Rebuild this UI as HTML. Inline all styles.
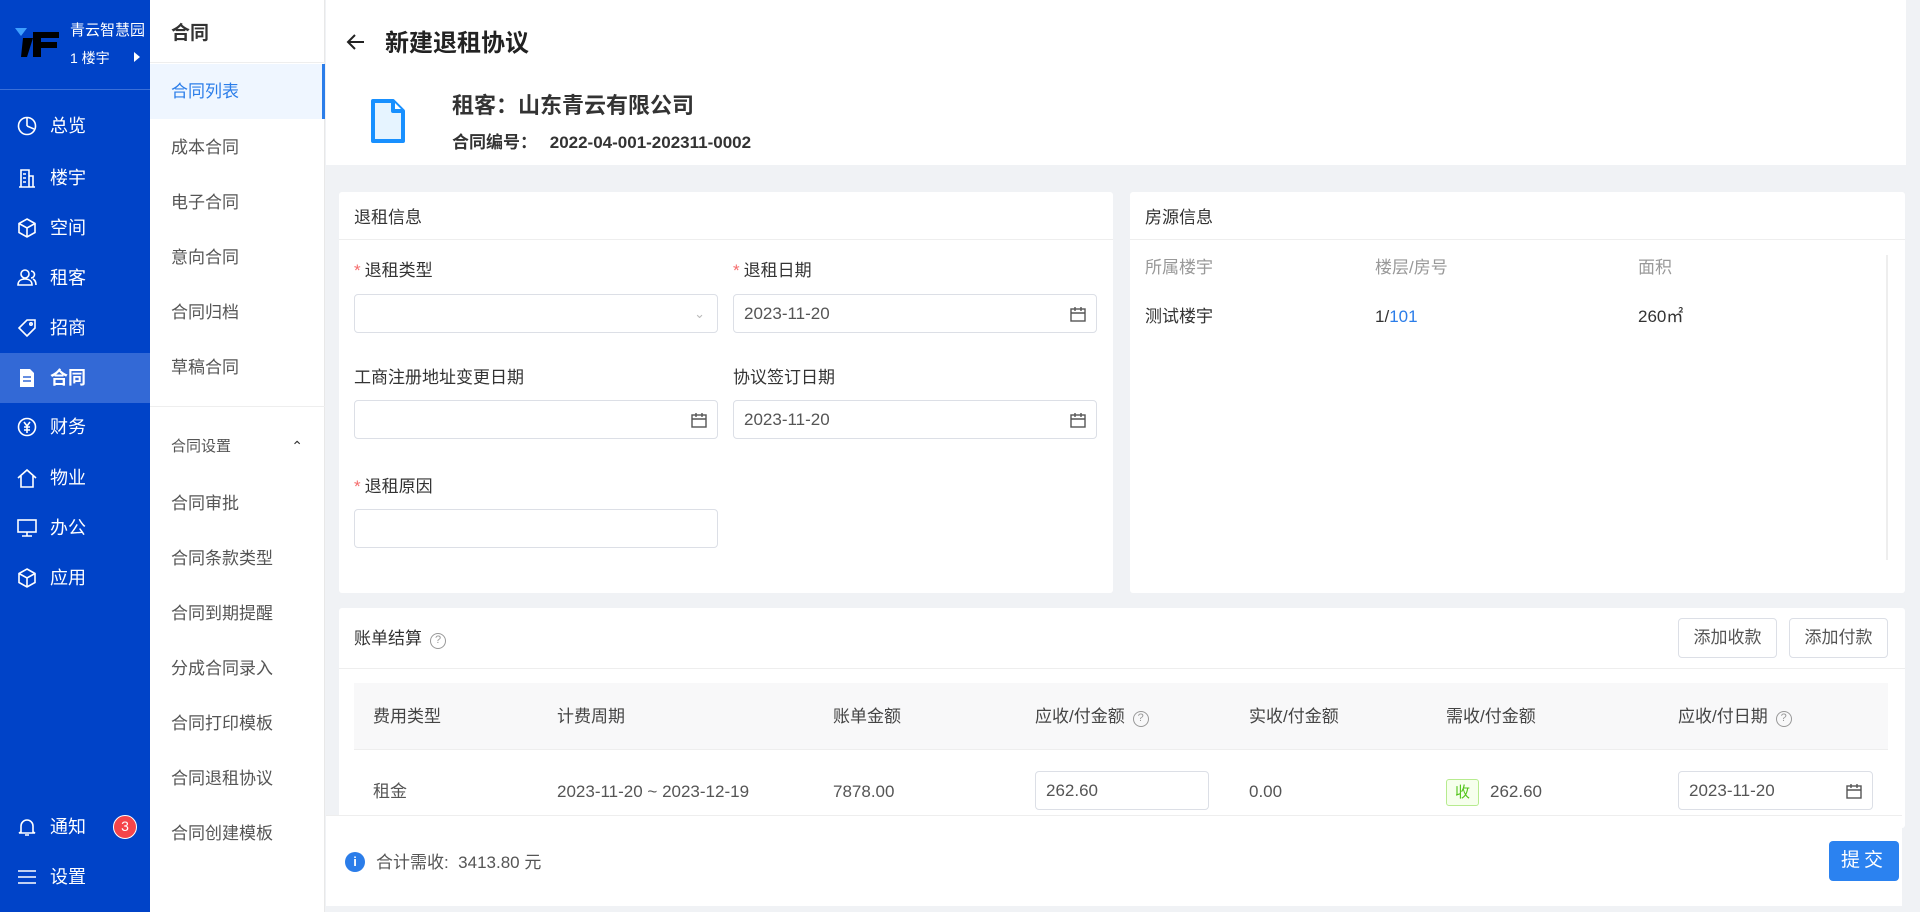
<!DOCTYPE html>
<html><head><meta charset="utf-8">
<style>
*{box-sizing:border-box;margin:0;padding:0}
body{width:1920px;height:912px;overflow:hidden;background:#f0f2f5;font-family:"Liberation Sans","Noto Sans CJK SC",sans-serif;color:#333;font-size:17px;position:relative}
.a{position:absolute;line-height:22px}
.side{left:0;top:0;width:150px;height:912px;background:#0043c8;color:#fff}
.mi{position:absolute;left:0;width:150px;height:50px;line-height:50px;padding-left:50px;font-size:18px;color:#fff}
.mi svg{position:absolute;left:17px;top:15px}
.sub{left:150px;top:0;width:175px;height:912px;background:#fff;border-right:1px solid #e8e8e8}
.si{position:absolute;left:0;width:175px;height:55px;line-height:55px;padding-left:21px;font-size:17px;color:#555}
.card{background:#fff;border-radius:3px}
.lbl{font-size:17px;color:#333}
.req{color:#f56c6c;margin-right:4px}
.inp{position:absolute;border:1px solid #dcdfe6;border-radius:4px;background:#fff;height:39px;font-size:17px;color:#555;padding:0 10px;line-height:37px}
.cal{position:absolute;right:10px;top:11px}
.th{position:absolute;top:706px;font-size:17px;color:#444;line-height:22px}
.td{position:absolute;top:781px;font-size:17px;color:#555;line-height:22px}
.btn{position:absolute;border:1px solid #dcdfe6;border-radius:4px;background:#fff;font-size:17px;color:#555;text-align:center;line-height:38px}
.q{display:inline-block;width:16px;height:16px;border:1.5px solid #999;border-radius:50%;font-size:11px;line-height:13px;text-align:center;color:#999;vertical-align:1px;margin-left:8px}
</style></head><body>

<div class="a side">
  <div class="a" style="left:15px;top:28px;width:44px;height:32px">
    <svg width="44" height="32" viewBox="0 0 44 32"><polygon points="0,0 12,0 6,8" fill="#3fa0ff"/><path d="M8 10h10l-6 19H6z M18 4h26v6H26v4h16v6H26v9h-8z" fill="#000"/></svg>
  </div>
  <div class="a" style="left:70px;top:20px;font-size:15px;white-space:nowrap;width:78px;overflow:hidden">青云智慧园</div>
  <div class="a" style="left:70px;top:47px;font-size:14px">1 楼宇</div>
  <div class="a" style="left:134px;top:52px;width:0;height:0;border-left:6px solid #fff;border-top:5px solid transparent;border-bottom:5px solid transparent"></div>
  <div class="a" style="left:0;top:89px;width:150px;height:1px;background:#3a6fd8"></div>
  <div class="mi" style="top:101px"><svg width="20" height="20" viewBox="0 0 20 20" fill="none" stroke="#fff" stroke-width="1.6"><circle cx="10" cy="10" r="8.5"/><path d="M10 10V2M10 10l7 3"/></svg>总览</div>
  <div class="mi" style="top:153px"><svg width="20" height="20" viewBox="0 0 20 20" fill="none" stroke="#fff" stroke-width="1.6"><path d="M2 19h16M4 19V2h8v17M12 8h4v11M6 6h3M6 10h3M6 14h3"/></svg>楼宇</div>
  <div class="mi" style="top:203px"><svg width="20" height="20" viewBox="0 0 20 20" fill="none" stroke="#fff" stroke-width="1.6"><path d="M10 1l8 4.5v9L10 19l-8-4.5v-9zM2 5.5l8 4.5 8-4.5M10 10v9"/></svg>空间</div>
  <div class="mi" style="top:253px"><svg width="20" height="20" viewBox="0 0 20 20" fill="none" stroke="#fff" stroke-width="1.6"><circle cx="8" cy="6" r="4"/><path d="M1 17c0-4 3-6 7-6s7 2 7 6zM14 3a3.5 3.5 0 010 7M16 11c2 1 3 3 3 6"/></svg>租客</div>
  <div class="mi" style="top:303px"><svg width="20" height="20" viewBox="0 0 20 20" fill="none" stroke="#fff" stroke-width="1.6"><path d="M10 2h8v8l-8 8-8-8z"/><circle cx="14" cy="6" r="1.2"/></svg>招商</div>
  <div class="mi" style="top:353px;background:#3369d6;font-weight:bold"><svg width="20" height="20" viewBox="0 0 20 20"><path d="M3 1h10l4 4v14H3z" fill="#fff"/><path d="M6 9h8M6 13h8" stroke="#3369d6" stroke-width="1.6"/></svg>合同</div>
  <div class="mi" style="top:402px"><svg width="20" height="20" viewBox="0 0 20 20" fill="none" stroke="#fff" stroke-width="1.6"><circle cx="10" cy="10" r="8.5"/><path d="M7 5l3 4 3-4M10 9v7M7 10h6M7 13h6"/></svg>财务</div>
  <div class="mi" style="top:453px"><svg width="20" height="20" viewBox="0 0 20 20" fill="none" stroke="#fff" stroke-width="1.6"><path d="M1 10l9-8 9 8M4 8v11h12V8"/></svg>物业</div>
  <div class="mi" style="top:503px"><svg width="20" height="20" viewBox="0 0 20 20" fill="none" stroke="#fff" stroke-width="1.6"><rect x="1" y="2" width="18" height="12"/><path d="M10 14v4M5 18h10"/></svg>办公</div>
  <div class="mi" style="top:553px"><svg width="20" height="20" viewBox="0 0 20 20" fill="none" stroke="#fff" stroke-width="1.6"><path d="M10 1l8 4.5v9L10 19l-8-4.5v-9zM2 5.5l8 4.5 8-4.5M10 10v9"/></svg>应用</div>
  <div class="mi" style="top:802px"><svg width="20" height="20" viewBox="0 0 20 20" fill="none" stroke="#fff" stroke-width="1.6"><path d="M4 15V9a6 6 0 0112 0v6l2 1H2zM8 18h4"/></svg>通知</div>
  <div class="a" style="left:113px;top:815px;width:24px;height:24px;border-radius:50%;background:#f5454a;border:1.5px solid #fff;font-size:14px;text-align:center;line-height:21px">3</div>
  <div class="mi" style="top:852px"><svg width="20" height="20" viewBox="0 0 20 20" fill="none" stroke="#fff" stroke-width="1.6"><path d="M1 4h18M1 10h18M1 16h18"/></svg>设置</div>
</div>

<div class="a sub">
  <div class="a" style="left:21px;top:23px;font-size:19px;font-weight:bold;color:#333">合同</div>
  <div class="a" style="left:0;top:62px;width:175px;height:1px;background:#eee"></div>
  <div class="si" style="top:64px;background:#eff6ff;color:#2b7de9;border-right:3px solid #2b7de9">合同列表</div>
  <div class="si" style="top:120px">成本合同</div>
  <div class="si" style="top:175px">电子合同</div>
  <div class="si" style="top:230px">意向合同</div>
  <div class="si" style="top:285px">合同归档</div>
  <div class="si" style="top:340px">草稿合同</div>
  <div class="a" style="left:0;top:406px;width:175px;height:1px;background:#eee"></div>
  <div class="si" style="top:419px;font-size:15px">合同设置<span style="position:absolute;right:22px;top:0;font-size:14px;color:#333">&#8963;</span></div>
  <div class="si" style="top:476px">合同审批</div>
  <div class="si" style="top:531px">合同条款类型</div>
  <div class="si" style="top:586px">合同到期提醒</div>
  <div class="si" style="top:641px">分成合同录入</div>
  <div class="si" style="top:696px">合同打印模板</div>
  <div class="si" style="top:751px">合同退租协议</div>
  <div class="si" style="top:806px">合同创建模板</div>
</div>

<!-- header -->
<div class="a" style="left:326px;top:0;width:1580px;height:165px;background:#fff"></div>
<svg class="a" style="left:346px;top:32px" width="20" height="20" viewBox="0 0 20 20" fill="none" stroke="#222" stroke-width="2"><path d="M18 10H3M9 3l-7 7 7 7"/></svg>
<div class="a" style="left:385px;top:30px;font-size:24px;font-weight:bold;color:#222;line-height:28px">新建退租协议</div>
<svg class="a" style="left:370px;top:98px" width="36" height="46" viewBox="0 0 36 46"><path d="M3 3h20l10 10v30H3z" fill="#e6f4ff" stroke="#1890ff" stroke-width="4" stroke-linejoin="round"/><path d="M23 3v10h10" fill="#fff" stroke="#1890ff" stroke-width="4" stroke-linejoin="round"/></svg>
<div class="a" style="left:452px;top:93px;font-size:22px;font-weight:bold;color:#333;line-height:26px">租客：山东青云有限公司</div>
<div class="a" style="left:452px;top:132px;font-size:17px;font-weight:bold;color:#333">合同编号： <span style="margin-left:8px">2022-04-001-202311-0002</span></div>

<!-- left card -->
<div class="a card" style="left:339px;top:192px;width:774px;height:401px"></div>
<div class="a" style="left:354px;top:207px;font-size:17px">退租信息</div>
<div class="a" style="left:339px;top:239px;width:774px;height:1px;background:#eee"></div>
<div class="a lbl" style="left:354px;top:260px"><span class="req">*</span>退租类型</div>
<div class="a lbl" style="left:733px;top:260px"><span class="req">*</span>退租日期</div>
<div class="inp" style="left:354px;top:294px;width:364px"><span style="position:absolute;right:12px;top:0;color:#bbb;font-size:13px">&#8964;</span></div>
<div class="inp" style="left:733px;top:294px;width:364px">2023-11-20<svg class="cal" width="16" height="16" viewBox="0 0 16 16" fill="none" stroke="#555" stroke-width="1.4"><rect x="1" y="3" width="14" height="12"/><path d="M1 7h14M5 1v4M11 1v4"/></svg></div>
<div class="a lbl" style="left:354px;top:367px">工商注册地址变更日期</div>
<div class="a lbl" style="left:733px;top:367px">协议签订日期</div>
<div class="inp" style="left:354px;top:400px;width:364px"><svg class="cal" width="16" height="16" viewBox="0 0 16 16" fill="none" stroke="#555" stroke-width="1.4"><rect x="1" y="3" width="14" height="12"/><path d="M1 7h14M5 1v4M11 1v4"/></svg></div>
<div class="inp" style="left:733px;top:400px;width:364px">2023-11-20<svg class="cal" width="16" height="16" viewBox="0 0 16 16" fill="none" stroke="#555" stroke-width="1.4"><rect x="1" y="3" width="14" height="12"/><path d="M1 7h14M5 1v4M11 1v4"/></svg></div>
<div class="a lbl" style="left:354px;top:476px"><span class="req">*</span>退租原因</div>
<div class="inp" style="left:354px;top:509px;width:364px"></div>

<!-- right card -->
<div class="a card" style="left:1130px;top:192px;width:775px;height:401px"></div>
<div class="a" style="left:1145px;top:207px;font-size:17px">房源信息</div>
<div class="a" style="left:1130px;top:239px;width:775px;height:1px;background:#eee"></div>
<div class="a" style="left:1145px;top:257px;color:#999">所属楼宇</div>
<div class="a" style="left:1375px;top:257px;color:#999">楼层/房号</div>
<div class="a" style="left:1638px;top:257px;color:#999">面积</div>
<div class="a" style="left:1145px;top:306px">测试楼宇</div>
<div class="a" style="left:1375px;top:306px">1/<span style="color:#2b7de9">101</span></div>
<div class="a" style="left:1638px;top:306px">260㎡</div>
<div class="a" style="left:1886px;top:255px;width:2px;height:305px;background:#eee"></div>

<!-- bill card -->
<div class="a card" style="left:339px;top:608px;width:1566px;height:220px"></div>
<div class="a" style="left:354px;top:628px;font-size:17px">账单结算<span class="q">?</span></div>
<div class="btn" style="left:1678px;top:618px;width:99px;height:40px">添加收款</div>
<div class="btn" style="left:1789px;top:618px;width:99px;height:40px">添加付款</div>
<div class="a" style="left:339px;top:668px;width:1566px;height:1px;background:#eee"></div>
<div class="a" style="left:354px;top:683px;width:1534px;height:67px;background:#f8f8f9;border-bottom:1px solid #eee"></div>
<div class="th" style="left:373px">费用类型</div>
<div class="th" style="left:557px">计费周期</div>
<div class="th" style="left:833px">账单金额</div>
<div class="th" style="left:1035px">应收/付金额<span class="q">?</span></div>
<div class="th" style="left:1249px">实收/付金额</div>
<div class="th" style="left:1446px">需收/付金额</div>
<div class="th" style="left:1678px">应收/付日期<span class="q">?</span></div>
<div class="td" style="left:373px">租金</div>
<div class="td" style="left:557px">2023-11-20 ~ 2023-12-19</div>
<div class="td" style="left:833px">7878.00</div>
<div class="inp" style="left:1035px;top:771px;width:174px">262.60</div>
<div class="td" style="left:1249px">0.00</div>
<div class="a" style="left:1446px;top:779px;width:33px;height:27px;border:1px solid #b7eb8f;background:#f6ffed;color:#52c41a;border-radius:3px;font-size:15px;text-align:center;line-height:25px">收</div>
<div class="td" style="left:1490px">262.60</div>
<div class="inp" style="left:1678px;top:771px;width:195px">2023-11-20<svg class="cal" width="16" height="16" viewBox="0 0 16 16" fill="none" stroke="#555" stroke-width="1.4"><rect x="1" y="3" width="14" height="12"/><path d="M1 7h14M5 1v4M11 1v4"/></svg></div>

<!-- footer -->
<div class="a" style="left:326px;top:815px;width:1576px;height:91px;background:#fff;border-top:1px solid #eee"></div>
<div class="a" style="left:345px;top:852px;width:20px;height:20px;border-radius:50%;background:#2b7de9;color:#fff;font-size:13px;text-align:center;line-height:20px;font-weight:bold">i</div>
<div class="a" style="left:376px;top:852px;font-size:17px;color:#555">合计需收:&nbsp; 3413.80 元</div>
<div class="a" style="left:1829px;top:841px;width:70px;height:40px;background:#2b82f0;border-radius:4px;color:#fff;font-size:19px;text-align:center;line-height:40px;letter-spacing:4px">提交</div>
</body></html>
